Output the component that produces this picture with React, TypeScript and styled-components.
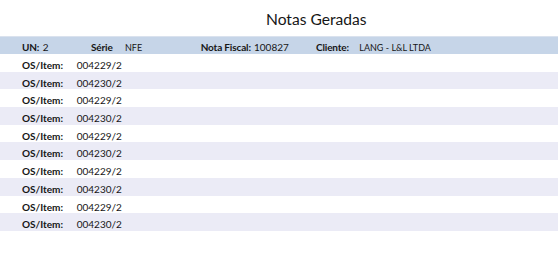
import React from "react";
import styled, { createGlobalStyle } from "styled-components";

const Global = createGlobalStyle`
  html, body { margin: 0; padding: 0; background: #ffffff; }
  body { font-family: Lato, "Open Sans", sans-serif; color: #161616; }
`;

const Page = styled.div`
  width: 558px;
  display: flex;
  flex-direction: column;
`;

const TitleBar = styled.div`
  height: 36px;
  padding-left: 266px;
  box-sizing: border-box;
`;

const Title = styled.h1`
  margin: 9px 0 0 0;
  font-size: 15.6px;
  font-weight: 400;
  line-height: 20px;
  color: #161616;
`;

const HeaderBar = styled.div`
  height: 18px;
  background: #c6d5e8;
  border-top: 1px solid #dae2ee;
  box-sizing: border-box;
  display: flex;
  align-items: flex-start;
  padding: 5.3px 0 0 22px;
  font-size: 10px;
  line-height: 11px;
`;

const Cell = styled.div<{ $w?: number }>`
  width: ${(p) => (p.$w ? `${p.$w}px` : "auto")};
  flex: none;
  display: flex;
  align-items: baseline;
  white-space: nowrap;
`;

const Label = styled.span<{ $w: number }>`
  min-width: ${(p) => p.$w}px;
  box-sizing: border-box;
  padding-right: 3px;
  flex: none;
  font-weight: 700;
  letter-spacing: -0.15px;
`;

const Value = styled.span<{ $small?: boolean }>`
  font-size: ${(p) => (p.$small ? "9px" : "10px")};
`;

const Rows = styled.div`
  display: flex;
  flex-direction: column;
`;

const Row = styled.div<{ $alt: boolean }>`
  height: 17.7px;
  box-sizing: border-box;
  display: flex;
  align-items: flex-start;
  padding: 6px 0 0 22px;
  background: ${(p) => (p.$alt ? "#ebebf6" : "#ffffff")};
  font-size: 10px;
  line-height: 11px;
`;

const RowLabel = styled.span`
  width: 54.7px;
  flex: none;
  font-weight: 700;
`;

const items = [
  "004229/2",
  "004230/2",
  "004229/2",
  "004230/2",
  "004229/2",
  "004230/2",
  "004229/2",
  "004230/2",
  "004229/2",
  "004230/2",
];

export default function App() {
  return (
    <Page>
      <Global />
      <TitleBar>
        <Title>Notas Geradas</Title>
      </TitleBar>
      <HeaderBar>
        <Cell $w={69}>
          <Label $w={20.7}>UN:</Label>
          <Value>2</Value>
        </Cell>
        <Cell $w={109.7}>
          <Label $w={34}>Série</Label>
          <Value $small>NFE</Value>
        </Cell>
        <Cell $w={115.3}>
          <Label $w={53.3}>Nota Fiscal:</Label>
          <Value>100827</Value>
        </Cell>
        <Cell>
          <Label $w={43.3}>Cliente:</Label>
          <Value $small>LANG - L&amp;L LTDA</Value>
        </Cell>
      </HeaderBar>
      <Rows>
        {items.map((it, i) => (
          <Row key={i} $alt={i % 2 === 1}>
            <RowLabel>OS/Item:</RowLabel>
            <span>{it}</span>
          </Row>
        ))}
      </Rows>
    </Page>
  );
}
